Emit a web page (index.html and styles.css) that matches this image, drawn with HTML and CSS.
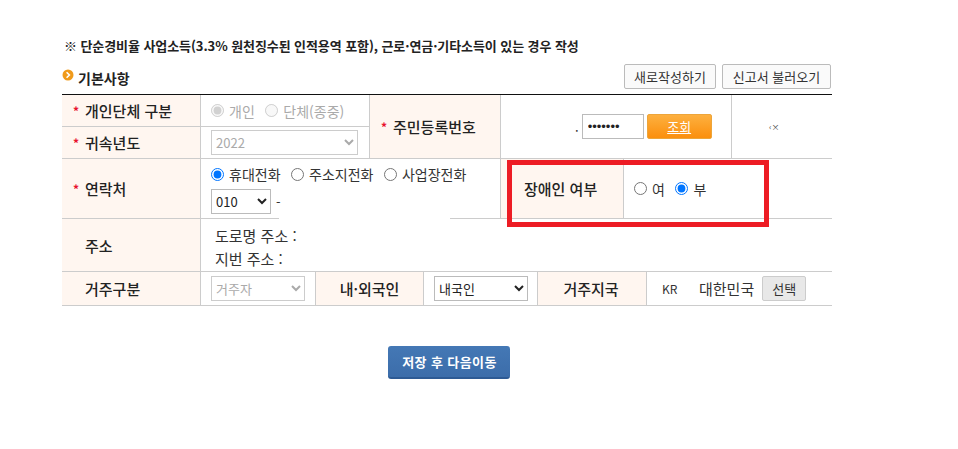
FILE: index.html
```html
<!DOCTYPE html>
<html lang="ko">

<head>
  <meta charset="UTF-8">
  <title>기본사항</title>
  <link rel="stylesheet" href="styles.css">
</head>

<body>
  <div class="wrap">
    <p class="notice">※ 단순경비율 사업소득(3.3% 원천징수된 인적용역 포함), 근로·연금·기타소득이 있는 경우 작성</p>

    <div class="title-bar">
      <h2 class="title">
        <svg class="title-icon" width="12" height="12" viewBox="0 0 12 12">
          <circle cx="6" cy="6" r="5.5" fill="#f09a1a" />
          <path d="M4.6 3.2 7.4 6 4.6 8.8" fill="none" stroke="#fff" stroke-width="1.6" />
        </svg>
        기본사항
      </h2>
      <div class="title-btns">
        <button type="button" class="btn-line btn-new">새로작성하기</button>
        <button type="button" class="btn-line btn-load">신고서 불러오기</button>
      </div>
    </div>

    <div class="form-table">
      <div class="top-grid">
        <div class="cell label"><span class="star">*</span>개인단체 구분</div>
        <div class="cell field muted">
          <label class="radio"><input type="radio" name="kind" checked disabled>개인</label>
          <label class="radio"><input type="radio" name="kind" disabled>단체(종중)</label>
        </div>
        <div class="cell label label-id"><span class="star">*</span>주민등록번호</div>
        <div class="cell field id-field">
          <span class="dot">.</span>
          <input type="password" class="id-input" value="1234567">
          <button type="button" class="btn-search">조회</button>
        </div>
        <div class="cell id-mark">‹×</div>
        <div class="cell label"><span class="star">*</span>귀속년도</div>
        <div class="cell field">
          <select class="sel sel-year" disabled>
            <option>2022</option>
          </select>
        </div>
      </div>

      <div class="row row-contact">
        <div class="cell label col-label"><span class="star">*</span>연락처</div>
        <div class="cell contact">
          <div class="contact-types">
            <label class="radio"><input type="radio" name="tel" checked>휴대전화</label>
            <label class="radio"><input type="radio" name="tel">주소지전화</label>
            <label class="radio"><input type="radio" name="tel">사업장전화</label>
          </div>
          <div class="contact-num">
            <select class="sel sel-tel">
              <option>010</option>
            </select>
            <span>-</span>
          </div>
        </div>
        <div class="cell label label-dis">장애인 여부</div>
        <div class="cell field dis-field">
          <label class="radio"><input type="radio" name="dis">여</label>
          <label class="radio"><input type="radio" name="dis" checked>부</label>
        </div>
        <div class="line-mask"></div>
      </div>

      <div class="row row-addr">
        <div class="cell label col-label">주소</div>
        <div class="cell addr">
          <div>도로명 주소 :</div>
          <div>지번 주소 :</div>
        </div>
      </div>

      <div class="row row-live">
        <div class="cell label col-label">거주구분</div>
        <div class="cell field live-field">
          <select class="sel sel-live" disabled>
            <option>거주자</option>
          </select>
        </div>
        <div class="cell label label-center label-nat">내·외국인</div>
        <div class="cell field nat-field">
          <select class="sel sel-nat">
            <option>내국인</option>
          </select>
        </div>
        <div class="cell label label-center label-country">거주지국</div>
        <div class="cell field country">
          <span class="code">KR</span>
          <span class="country-name">대한민국</span>
          <button type="button" class="btn-pick">선택</button>
        </div>
      </div>

      <div class="red-box"></div>
    </div>

    <div class="actions">
      <button type="button" class="btn-save">저장 후 다음이동</button>
    </div>
  </div>
</body>

</html>
```

FILE: styles.css
```css
* {
  margin: 0;
  padding: 0;
  box-sizing: border-box;
}

body {
  font-family: 'Noto Sans CJK KR', 'Liberation Sans', sans-serif;
  font-size: 13px;
  color: #333;
  background: #fff;
}

.wrap {
  width: 770px;
  margin-left: 62px;
  padding-top: 37px;
}

.notice {
  padding-left: 2px;
  font-size: 13px;
  line-height: 17px;
  letter-spacing: -0.08px;
  font-weight: 700;
  color: #222;
}

.title-bar {
  display: flex;
  justify-content: space-between;
  align-items: center;
  height: 25px;
  margin-top: 10px;
  margin-bottom: 5px;
}

.title {
  display: flex;
  align-items: center;
  gap: 4px;
  padding-top: 2px;
  font-size: 14px;
  font-weight: 700;
  color: #222;
}

.title-icon {
  margin-top: -6px;
}

.title-btns {
  display: flex;
  gap: 6px;
  padding-right: 1px;
}

.btn-line {
  height: 25px;
  border: 1px solid #bbb;
  border-radius: 2px;
  background: #fafafa;
  font-family: inherit;
  font-size: 13px;
  color: #333;
}

.btn-new {
  width: 92px;
}

.btn-load {
  width: 109px;
}

/* 표 */
.form-table {
  position: relative;
  border-top: 1px solid #111;
}

.top-grid {
  display: grid;
  grid-template-columns: 139px 169px 131px 231px 100px;
  grid-template-rows: 32px 32px;
}

.row {
  display: flex;
  position: relative;
}

.row-contact {
  height: 60px;
}

.row-addr {
  height: 53px;
}

.row-live {
  height: 34px;
}

.cell {
  display: flex;
  align-items: center;
  border-right: 1px solid #ccc;
  border-bottom: 1px solid #ccc;
}

.label {
  padding-left: 11px;
  background: #fff6f0;
  font-size: 15px;
  font-weight: 500;
  color: #222;
}

.col-label {
  width: 139px;
  padding-left: 23px;
}

.col-label .star {
  margin-left: -12px;
}

.star {
  width: 12px;
  color: #e8112d;
  font-weight: 700;
  font-size: 12px;
}

.label-id {
  grid-row: 1 / 3;
  grid-column: 3;
}

.field {
  padding-left: 10px;
}

.id-field {
  grid-row: 1 / 3;
  grid-column: 4;
  padding-left: 74px;
}

.id-mark {
  grid-row: 1 / 3;
  grid-column: 5;
  padding-left: 37px;
  font-size: 8px;
  color: #444;
  border-right: 0;
}

.muted {
  color: #aaa;
}

.radio {
  display: inline-flex;
  align-items: center;
  margin-right: 10.5px;
  font-size: 14px;
}

.radio input {
  width: 13px;
  height: 13px;
  margin-right: 5px;
}

.dot {
  margin-right: 3px;
}

.id-input {
  width: 62px;
  height: 25px;
  padding-left: 5px;
  border: 1px solid #bbb;
  font-size: 13px;
  color: #222;
}

.btn-search {
  width: 65px;
  height: 25px;
  margin-left: 3px;
  border: 1px solid #eda53a;
  border-radius: 2px;
  background: linear-gradient(#fdb03f, #fb8f0d);
  font-family: inherit;
  font-size: 13px;
  color: #fff;
  text-decoration: underline;
}

.sel {
  height: 25px;
  border: 1px solid #bbb;
  background: #fff;
  font-family: inherit;
  font-size: 13px;
  color: #222;
}

.sel:disabled {
  border-color: #ccc;
  color: #aaa;
  opacity: 1;
}

.sel-year {
  width: 147px;
}

.sel-tel {
  width: 60px;
}

.sel-live {
  width: 94px;
}

.sel-nat {
  width: 94px;
}

.contact {
  display: block;
  width: 300px;
  padding: 0 0 0 10px;
}

.contact-types {
  display: flex;
  height: 30px;
  align-items: center;
}

.contact-num {
  display: flex;
  align-items: center;
  gap: 5px;
}

.label-dis {
  width: 123px;
  padding-left: 23px;
}

.dis-field {
  flex: 1;
  border-right: 0;
}

.line-mask {
  position: absolute;
  left: 217px;
  bottom: 0;
  width: 171px;
  height: 2px;
  background: #fff;
}

.addr {
  flex: 1;
  display: block;
  padding: 5px 0 0 14px;
  border-right: 0;
  font-size: 15px;
  line-height: 23px;
}

.live-field {
  width: 115px;
}

.label-center {
  justify-content: center;
  padding-left: 0;
}

.label-nat {
  width: 108px;
}

.nat-field {
  width: 114px;
}

.label-country {
  width: 109px;
  padding-right: 2px;
}

.country {
  flex: 1;
  padding-left: 15px;
  border-right: 0;
}

.code {
  width: 37px;
  font-size: 12px;
}

.country-name {
  font-size: 15px;
}

.btn-pick {
  width: 44px;
  height: 25px;
  margin-left: 8px;
  border: 1px solid #ccc;
  border-radius: 2px;
  background: #e8e8e8;
  font-family: inherit;
  font-size: 13px;
  color: #333;
}

.red-box {
  position: absolute;
  left: 445px;
  top: 65px;
  width: 262px;
  height: 67px;
  border: 5px solid #ed1c24;
}

.actions {
  display: flex;
  justify-content: center;
  padding: 40px 0 0 3px;
}

.btn-save {
  width: 122px;
  height: 33px;
  padding-left: 2px;
  border: 0;
  border-bottom: 2px solid #2d5a94;
  border-radius: 3px;
  background: linear-gradient(#4478b5, #3c6daa);
  font-family: inherit;
  font-size: 13px;
  letter-spacing: 0.4px;
  font-weight: 700;
  color: #fff;
}
```
